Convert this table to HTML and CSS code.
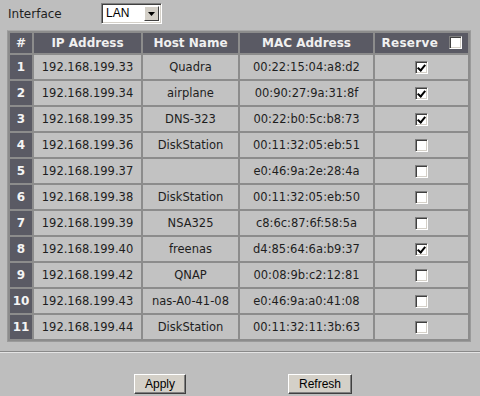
FILE: index.html
```html
<!DOCTYPE html>
<html>
<head>
<meta charset="utf-8">
<link rel="stylesheet" href="styles.css">
</head>
<body>
<div class="top">
  <span class="lbl">Interface</span>
  <div class="select"><span class="val">LAN</span><span class="arrow"><svg width="7" height="4" viewBox="0 0 7 4"><path d="M0 0H7L3.5 4Z" fill="#000"/></svg></span></div>
</div>
<table class="grid">
  <colgroup><col class="c0"><col class="c1"><col class="c2"><col class="c3"><col class="c4"></colgroup>
  <thead>
    <tr><th>#</th><th>IP Address</th><th>Host Name</th><th>MAC Address</th><th class="res">Reserve <span class="cb hcb"></span></th></tr>
  </thead>
  <tbody>
    <tr><td class="n">1</td><td>192.168.199.33</td><td>Quadra</td><td>00:22:15:04:a8:d2</td><td><span class="cb on"></span></td></tr>
    <tr><td class="n">2</td><td>192.168.199.34</td><td>airplane</td><td>00:90:27:9a:31:8f</td><td><span class="cb on"></span></td></tr>
    <tr><td class="n">3</td><td>192.168.199.35</td><td>DNS-323</td><td>00:22:b0:5c:b8:73</td><td><span class="cb on"></span></td></tr>
    <tr><td class="n">4</td><td>192.168.199.36</td><td>DiskStation</td><td>00:11:32:05:eb:51</td><td><span class="cb"></span></td></tr>
    <tr><td class="n">5</td><td>192.168.199.37</td><td></td><td>e0:46:9a:2e:28:4a</td><td><span class="cb"></span></td></tr>
    <tr><td class="n">6</td><td>192.168.199.38</td><td>DiskStation</td><td>00:11:32:05:eb:50</td><td><span class="cb"></span></td></tr>
    <tr><td class="n">7</td><td>192.168.199.39</td><td>NSA325</td><td>c8:6c:87:6f:58:5a</td><td><span class="cb"></span></td></tr>
    <tr><td class="n">8</td><td>192.168.199.40</td><td>freenas</td><td>d4:85:64:6a:b9:37</td><td><span class="cb on"></span></td></tr>
    <tr><td class="n">9</td><td>192.168.199.42</td><td>QNAP</td><td>00:08:9b:c2:12:81</td><td><span class="cb"></span></td></tr>
    <tr><td class="n">10</td><td>192.168.199.43</td><td>nas-A0-41-08</td><td>e0:46:9a:a0:41:08</td><td><span class="cb"></span></td></tr>
    <tr><td class="n">11</td><td>192.168.199.44</td><td>DiskStation</td><td>00:11:32:11:3b:63</td><td><span class="cb"></span></td></tr>
  </tbody>
</table>
<div class="sep"></div>
<div class="buttons">
  <div class="bcell"><button class="btn b1">Apply</button></div>
  <div class="bcell"><button class="btn b2">Refresh</button></div>
</div>
</body>
</html>
```

FILE: styles.css
```css
html, body {
  margin: 0;
  padding: 0;
  background: #bebebe;
  width: 480px;
  height: 396px;
  overflow: hidden;
  font-family: "DejaVu Sans", Verdana, sans-serif;
  color: #1e1e1e;
}
.top {
  display: flex;
  align-items: center;
  height: 21px;
  padding: 3px 0 0 8px;
}
.lbl {
  font-size: 12px;
  width: 93px;
}
.select {
  display: flex;
  width: 61px;
  height: 21px;
  box-sizing: border-box;
  background: #fff;
  border-top: 1px solid #808080;
  border-left: 1px solid #808080;
  border-right: 1px solid #fff;
  border-bottom: 1px solid #fff;
  box-shadow: inset 1px 1px 0 #404040, inset -1px -1px 0 #d4d0c8;
  padding: 2px;
}
.val {
  flex: 1;
  font-family: "Liberation Sans", Arial, sans-serif;
  font-size: 12px;
  line-height: 15px;
  padding-left: 2px;
  color: #000;
}
.arrow {
  width: 15px;
  height: 15px;
  box-sizing: border-box;
  background: #d4d0c8;
  border-top: 1px solid #fff;
  border-left: 1px solid #fff;
  border-right: 1px solid #404040;
  border-bottom: 1px solid #404040;
  display: flex;
  align-items: center;
  justify-content: center;
}
.grid {
  margin: 6px 0 0 7px;
  border-collapse: separate;
  border-spacing: 2px;
  background: #8c8c8c;
  border: 1px solid #9a9a9a;
  border-top-color: #a8a8a8;
  table-layout: fixed;
  width: 464px;
}
.c0 { width: 22px; }
.c1 { width: 107px; }
.c2 { width: 95px; }
.c3 { width: 133px; }
.c4 { width: 93px; }
.grid th {
  background: #5a5a64;
  color: #f0f0f0;
  font-weight: bold;
  font-size: 12px;
  height: 20px;
  padding: 0;
  text-align: center;
  white-space: nowrap;
}
.grid td {
  background: #c2c2c2;
  font-size: 11.5px;
  height: 24px;
  padding: 0;
  text-align: center;
  white-space: nowrap;
}
.grid td.n {
  background: #5a5a64;
  color: #f4f4f4;
  font-weight: bold;
  font-size: 12px;
}
.res {
  letter-spacing: 0.3px;
}
.cb {
  display: inline-block;
  vertical-align: middle;
  width: 13px;
  height: 13px;
  box-sizing: border-box;
  background: #fff;
  border-top: 1px solid #808080;
  border-left: 1px solid #808080;
  border-right: 1px solid #fff;
  border-bottom: 1px solid #fff;
  box-shadow: inset 1px 1px 0 #404040, inset -1px -1px 0 #d4d0c8;
  position: relative;
}
.hcb {
  margin-left: 6px;
  margin-top: -3px;
}
.cb.on::after {
  content: "";
  position: absolute;
  left: 3px;
  top: 1px;
  width: 3px;
  height: 6px;
  border-right: 2px solid #000;
  border-bottom: 2px solid #000;
  transform: rotate(40deg);
}
.sep {
  margin-top: 9px;
  height: 1px;
  background: #8a8a8a;
  border-bottom: 1px solid #e4e4e4;
}
.buttons {
  display: grid;
  grid-template-columns: 1fr 1fr;
  padding: 0 80px;
  margin-top: 21px;
}
.bcell {
  display: flex;
  justify-content: center;
}
.btn {
  font-family: "Liberation Sans", Arial, sans-serif;
  font-size: 12px;
  color: #000;
  background: #d4d0c8;
  height: 20px;
  padding: 0;
  border-top: 1px solid #fff;
  border-left: 1px solid #fff;
  border-right: 1px solid #404040;
  border-bottom: 1px solid #404040;
  box-shadow: inset -1px -1px 0 #808080;
}
.b1 { width: 52px; }
.b2 { width: 64px; }
```
